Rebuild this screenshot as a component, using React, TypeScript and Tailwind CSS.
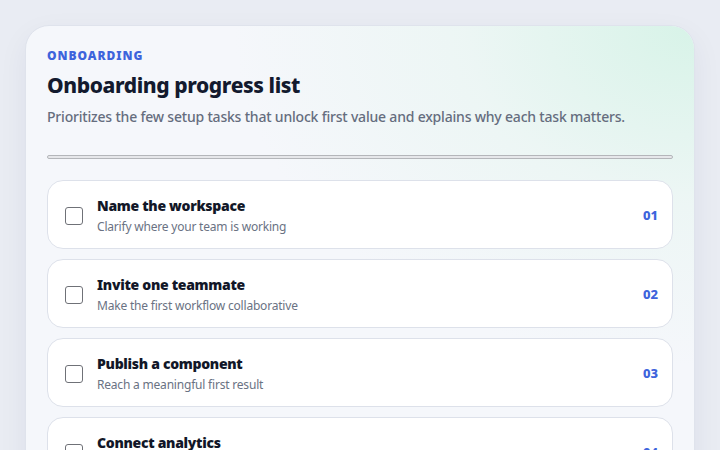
import React from "react";

const tasks = [
  { n: "01", t: "Name the workspace", d: "Clarify where your team is working" },
  { n: "02", t: "Invite one teammate", d: "Make the first workflow collaborative" },
  { n: "03", t: "Publish a component", d: "Reach a meaningful first result" },
  { n: "04", t: "Connect analytics", d: "See how the first value is measured" },
];

export default function App() {
  return (
    <div
      className="w-[720px] h-[450px] overflow-hidden bg-[#e9ecf3] pt-[25px] px-[25px]"
      style={{ fontFamily: '"Noto Sans", "Open Sans", sans-serif' }}
    >
      <div className="relative rounded-t-[24px] border border-[#dfe3ec] bg-[#f5f7fb] px-[21px] pt-[22px] pb-6 shadow-[0_10px_30px_rgba(30,40,80,0.06)] overflow-hidden">
        <div className="pointer-events-none absolute inset-0 bg-[radial-gradient(ellipse_460px_340px_at_100%_0%,rgba(214,243,231,0.95),rgba(228,245,238,0.5)_50%,rgba(245,247,251,0)_100%)]" />
        <div className="relative">
          <div className="text-[12px] font-black tracking-[0.08em] text-[#3d64dc] leading-[16px]">ONBOARDING</div>
          <h1 className="mt-[6px] text-[21px] font-extrabold leading-[30px] tracking-[-0.4px] text-[#131a2e]">Onboarding progress list</h1>
          <p className="mt-[7px] text-[14px] font-medium leading-[20px] tracking-[-0.2px] text-[#656d7e]">
            Prioritizes the few setup tasks that unlock first value and explains why each task matters.
          </p>
          <div className="mt-[28px] h-[4px] rounded-full border border-[#b4b6ba] bg-[#e6e7ea]" />
          <div className="mt-[21px] flex flex-col gap-[10px]">
            {tasks.map((x) => (
              <div
                key={x.n}
                className="flex h-[69px] items-center rounded-[16px] border border-[#dde1ea] bg-white pl-[17px] pr-[14px] pt-[2px]"
              >
                <div className="h-[18px] w-[18px] rounded-[3px] border border-[#6f7177] bg-white" />
                <div className="ml-[14px] flex-1">
                  <div className="text-[14px] font-black leading-[18px] tracking-[-0.3px] text-[#121728]">{x.t}</div>
                  <div className="mt-[4px] text-[12px] leading-[16px] tracking-[-0.2px] text-[#6a7283]">{x.d}</div>
                </div>
                <div className="text-[13px] font-extrabold text-[#3d64dc]">{x.n}</div>
              </div>
            ))}
          </div>
        </div>
      </div>
    </div>
  );
}
